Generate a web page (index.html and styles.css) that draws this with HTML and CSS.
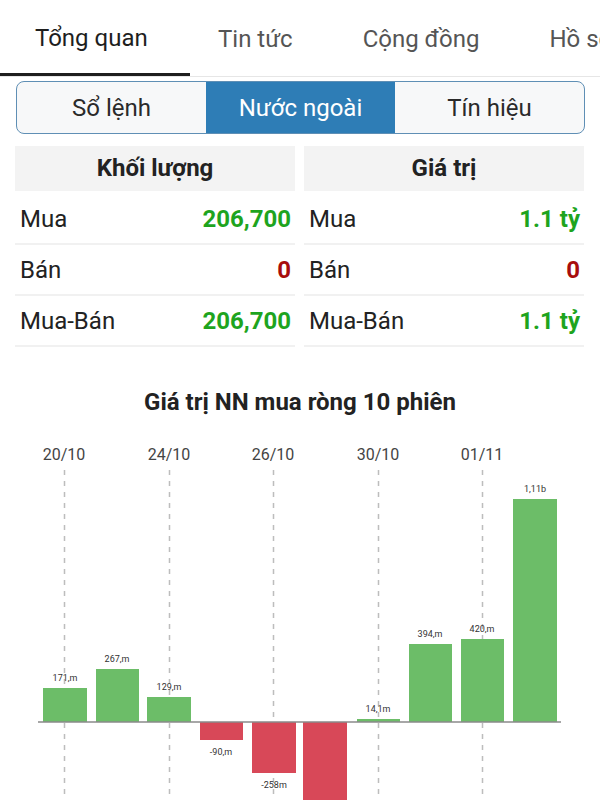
FILE: index.html
```html
<!DOCTYPE html>
<html lang="vi">
<head>
    <meta charset="UTF-8">
    <meta name="viewport" content="width=device-width, initial-scale=1.0">
    <title>Nước ngoài</title>
    <link rel="stylesheet" href="styles.css">
</head>
<body>
    <!-- Tabs chính -->
    <nav class="tabs">
        <div class="tab active">Tổng quan</div>
        <div class="tab">Tin tức</div>
        <div class="tab">Cộng đồng</div>
        <div class="tab">Hồ sơ</div>
    </nav>

    <div class="segment">
        <div class="seg">Sổ lệnh</div>
        <div class="seg on">Nước ngoài</div>
        <div class="seg">Tín hiệu</div>
    </div>

    <!-- Bảng khối lượng / giá trị -->
    <div class="stats">
        <div class="col">
            <div class="head">Khối lượng</div>
            <div class="row"><span>Mua</span><b class="up">206,700</b></div>
            <div class="row"><span>Bán</span><b class="down">0</b></div>
            <div class="row"><span>Mua-Bán</span><b class="up">206,700</b></div>
        </div>
        <div class="col">
            <div class="head">Giá trị</div>
            <div class="row"><span>Mua</span><b class="up">1.1 tỷ</b></div>
            <div class="row"><span>Bán</span><b class="down">0</b></div>
            <div class="row"><span>Mua-Bán</span><b class="up">1.1 tỷ</b></div>
        </div>
    </div>

    <h2 class="title">Giá trị NN mua ròng 10 phiên</h2>

    <svg class="chart" width="600" height="370" viewBox="0 430 600 370">
        <g class="dates">
            <text x="64" y="460">20/10</text>
            <text x="169" y="460">24/10</text>
            <text x="273" y="460">26/10</text>
            <text x="378" y="460">30/10</text>
            <text x="482" y="460">01/11</text>
        </g>
        <g class="grid">
            <line x1="64.5" y1="470" x2="64.5" y2="800"/>
            <line x1="169.5" y1="470" x2="169.5" y2="800"/>
            <line x1="273.5" y1="470" x2="273.5" y2="800"/>
            <line x1="378.5" y1="470" x2="378.5" y2="800"/>
            <line x1="482.5" y1="470" x2="482.5" y2="800"/>
        </g>
        <g class="pos">
            <rect x="43" y="688" width="44" height="34"/>
            <rect x="96" y="669" width="43" height="53"/>
            <rect x="147" y="697" width="44" height="25"/>
            <rect x="357" y="719" width="43" height="3"/>
            <rect x="409" y="644" width="43" height="78"/>
            <rect x="461" y="639" width="43" height="83"/>
            <rect x="513" y="499" width="44" height="223"/>
        </g>
        <g class="neg">
            <rect x="200" y="722" width="43" height="18"/>
            <rect x="252" y="722" width="44" height="51"/>
            <rect x="303" y="722" width="44" height="90"/>
        </g>
        <line class="zero" x1="38" y1="722" x2="561" y2="722"/>
        <g class="vals">
            <text x="65" y="681">171,m</text>
            <text x="117" y="662">267,m</text>
            <text x="169" y="690">129,m</text>
            <text x="221" y="755">-90,m</text>
            <text x="274" y="788">-258m</text>
            <text x="378" y="712">14,1m</text>
            <text x="430" y="637">394,m</text>
            <text x="482" y="632">420,m</text>
            <text x="535" y="492">1,11b</text>
        </g>
    </svg>
</body>
</html>
```

FILE: styles.css
```css
body {
    font-family: Roboto, "Noto Sans", sans-serif;
    background-color: #fff;
    color: #222;
    margin: 0;
    padding: 0;
    width: 600px;
    overflow: hidden;
}
.tabs {
    display: flex;
    height: 76px;
    border-bottom: 1px solid #e6e6e6;
    white-space: nowrap;
    overflow: hidden;
}
.tab {
    flex-shrink: 0;
    padding: 0 35px;
    font-size: 24px;
    line-height: 78px;
    color: #555;
    box-sizing: border-box;
}
.tab.active {
    width: 190px;
    margin-right: -7px;
    color: #1e1e1e;
    border-bottom: 3px solid #1e1e1e;
    line-height: 76px;
}
.segment {
    display: flex;
    margin: 4px 15px 0 16px;
    height: 53px;
    border: 1.5px solid #5f8fb5;
    border-radius: 8px;
    overflow: hidden;
    box-sizing: border-box;
    background-color: #f7f8f9;
}
.seg {
    flex: 1;
    display: flex;
    align-items: center;
    justify-content: center;
    font-size: 24px;
    color: #2a2a2a;
}
.seg.on {
    background-color: #2e7db6;
    color: #fff;
}
.stats {
    display: flex;
    gap: 9px;
    margin: 12px 16px 0 15px;
}
.col {
    flex: 1;
}
.head {
    height: 45px;
    line-height: 45px;
    margin-bottom: 3px;
    background-color: #f3f3f3;
    text-align: center;
    font-weight: bold;
    font-size: 24px;
}
.row {
    display: flex;
    justify-content: space-between;
    align-items: center;
    height: 49px;
    padding: 0 4px 0 5px;
    font-size: 24px;
    border-bottom: 2px solid #f1f1f1;
}
.row b {
    font-weight: bold;
}
.up {
    color: #1ea41e;
}
.down {
    color: #a80d0d;
}
.title {
    margin: 28px 0 0;
    text-align: center;
    font-size: 24px;
    font-weight: bold;
    color: #222;
    height: 55px;
    line-height: 54px;
}
.chart {
    display: block;
}
.dates text {
    font-size: 16px;
    fill: #444;
    text-anchor: middle;
}
.grid line {
    stroke: #bdbdbd;
    stroke-width: 1.5;
    stroke-dasharray: 5 6;
}
.pos rect {
    fill: #6cbd68;
}
.neg rect {
    fill: #d84858;
}
.zero {
    stroke: #8a8a8a;
    stroke-width: 1.5;
}
.vals text {
    font-size: 9px;
    fill: #333;
    text-anchor: middle;
}
```
